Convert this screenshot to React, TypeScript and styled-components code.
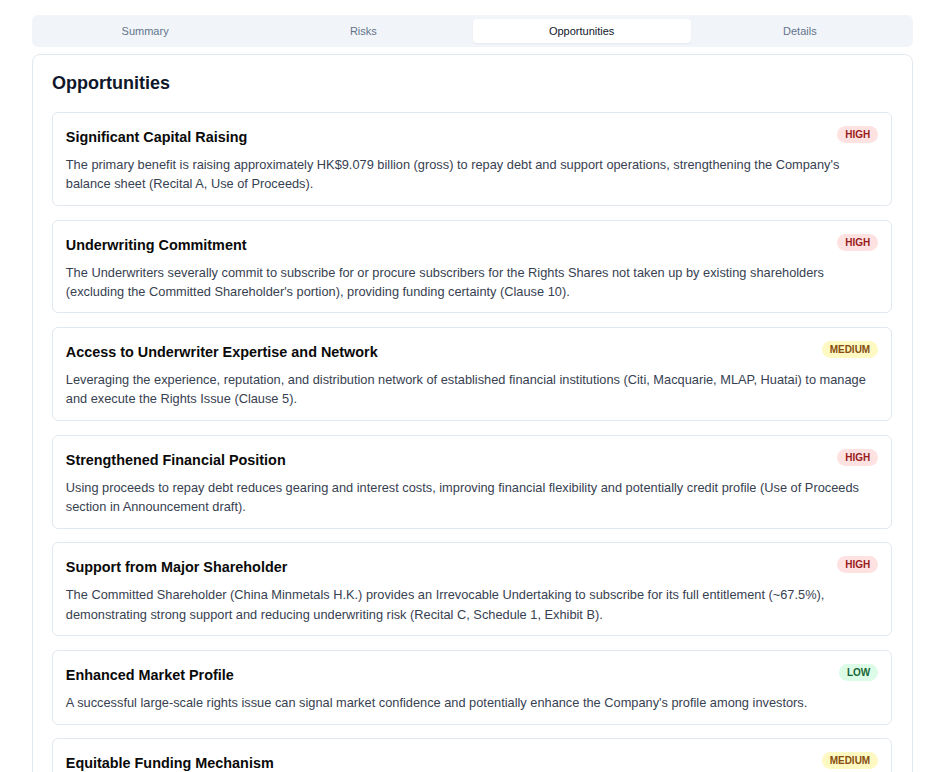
import React from "react";
import styled, { createGlobalStyle } from "styled-components";

const Global = createGlobalStyle`
  html, body { margin: 0; padding: 0; background: #ffffff; }
  body { font-family: "Liberation Sans", Arial, sans-serif; }
  * { box-sizing: border-box; }
`;

const Page = styled.div`
  padding: 15px 31px 0 32px;
  display: flex;
  flex-direction: column;
  gap: 7px;
`;

const TabBar = styled.div`
  display: grid;
  grid-template-columns: repeat(4, 1fr);
  padding: 4px;
  height: 32px;
  background: #f1f5f9;
  border-radius: 6px;
`;

const Tab = styled.div<{ $active?: boolean }>`
  display: flex;
  align-items: center;
  justify-content: center;
  font-size: 11px;
  font-weight: 500;
  color: ${(p) => (p.$active ? "#0f172a" : "#64748b")};
  background: ${(p) => (p.$active ? "#ffffff" : "transparent")};
  border-radius: 4px;
  box-shadow: ${(p) => (p.$active ? "0 1px 2px rgba(0,0,0,0.05)" : "none")};
`;

const Panel = styled.div`
  border: 1px solid #e2e8f0;
  border-radius: 8px;
  padding: 14px 20px 20px 19px;
  display: flex;
  flex-direction: column;
  min-height: 760px;
`;

const Heading = styled.h2`
  margin: 0 0 15px;
  font-size: 18px;
  line-height: 28px;
  font-weight: 700;
  color: #0f172a;
`;

const List = styled.div`
  display: flex;
  flex-direction: column;
  gap: 13.8px;
`;

const Card = styled.div`
  border: 1px solid #e2e8f0;
  border-radius: 6px;
  padding: 14px 12.8px 11.4px;
  display: flex;
  flex-direction: column;
  gap: 8px;
`;

const CardHead = styled.div`
  display: flex;
  justify-content: space-between;
  align-items: flex-start;
  gap: 12px;
`;

const Title = styled.div`
  font-size: 14.4px;
  line-height: 20px;
  font-weight: 700;
  color: #0a0a0a;
`;

const badgeColors: Record<string, [string, string]> = {
  HIGH: ["#fee2e2", "#991b1b"],
  MEDIUM: ["#fef9c3", "#854d0e"],
  LOW: ["#dcfce7", "#166534"],
};

const Badge = styled.span<{ $level: string }>`
  flex: none;
  margin-top: -1px;
  font-size: 10px;
  line-height: 13px;
  font-weight: 700;
  padding: 2px 8px;
  border-radius: 999px;
  background: ${(p) => badgeColors[p.$level][0]};
  color: ${(p) => badgeColors[p.$level][1]};
`;

const Desc = styled.p`
  margin: 0;
  font-size: 12.8px;
  line-height: 19.2px;
  color: #374151;
`;

const items = [
  {
    title: "Significant Capital Raising",
    level: "HIGH",
    desc: "The primary benefit is raising approximately HK$9.079 billion (gross) to repay debt and support operations, strengthening the Company's balance sheet (Recital A, Use of Proceeds).",
  },
  {
    title: "Underwriting Commitment",
    level: "HIGH",
    desc: "The Underwriters severally commit to subscribe for or procure subscribers for the Rights Shares not taken up by existing shareholders (excluding the Committed Shareholder's portion), providing funding certainty (Clause 10).",
  },
  {
    title: "Access to Underwriter Expertise and Network",
    level: "MEDIUM",
    desc: "Leveraging the experience, reputation, and distribution network of established financial institutions (Citi, Macquarie, MLAP, Huatai) to manage and execute the Rights Issue (Clause 5).",
  },
  {
    title: "Strengthened Financial Position",
    level: "HIGH",
    desc: "Using proceeds to repay debt reduces gearing and interest costs, improving financial flexibility and potentially credit profile (Use of Proceeds section in Announcement draft).",
  },
  {
    title: "Support from Major Shareholder",
    level: "HIGH",
    desc: "The Committed Shareholder (China Minmetals H.K.) provides an Irrevocable Undertaking to subscribe for its full entitlement (~67.5%), demonstrating strong support and reducing underwriting risk (Recital C, Schedule 1, Exhibit B).",
  },
  {
    title: "Enhanced Market Profile",
    level: "LOW",
    desc: "A successful large-scale rights issue can signal market confidence and potentially enhance the Company's profile among investors.",
  },
  {
    title: "Equitable Funding Mechanism",
    level: "MEDIUM",
    desc: "A rights issue allows all qualifying shareholders to participate on a pro rata basis, avoiding dilution for those who take up their entitlements.",
  },
];

const tabs = ["Summary", "Risks", "Opportunities", "Details"];

export default function App() {
  return (
    <>
      <Global />
      <Page>
        <TabBar>
          {tabs.map((t) => (
            <Tab key={t} $active={t === "Opportunities"}>
              {t}
            </Tab>
          ))}
        </TabBar>
        <Panel>
          <Heading>Opportunities</Heading>
          <List>
            {items.map((it) => (
              <Card key={it.title}>
                <CardHead>
                  <Title>{it.title}</Title>
                  <Badge $level={it.level}>{it.level}</Badge>
                </CardHead>
                <Desc>{it.desc}</Desc>
              </Card>
            ))}
          </List>
        </Panel>
      </Page>
    </>
  );
}
